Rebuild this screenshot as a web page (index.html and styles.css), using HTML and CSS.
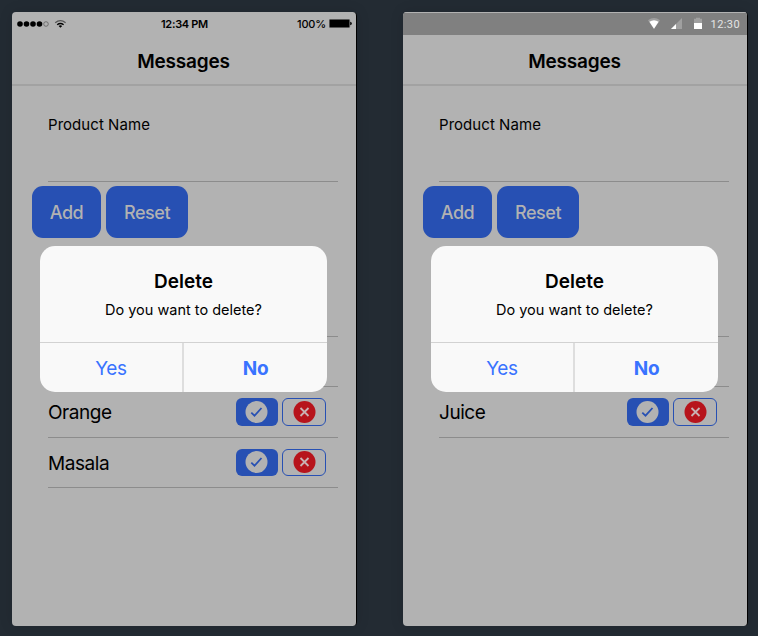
FILE: index.html
```html
<!DOCTYPE html>
<html lang="en">
<head>
<meta charset="utf-8">
<title>Messages</title>
<link rel="stylesheet" href="styles.css">
</head>
<body>
<svg class="defs" width="0" height="0" aria-hidden="true">
  <symbol id="check" viewBox="0 0 22 22"><circle cx="11" cy="11" r="11" fill="#b2b2b2"/><path d="M5.8 11.7 9 14.7 16 7" fill="none" stroke="#2750b3" stroke-width="1.8"/></symbol>
  <symbol id="close" viewBox="0 0 22 22"><circle cx="11" cy="11" r="11" fill="#b7141b"/><path d="m7 7 8 8m0-8-8 8" fill="none" stroke="#c9b2b3" stroke-width="1.8"/></symbol>
</svg>
<main class="stage">
  <section class="phone">
    <div class="status ios">
      <svg class="signal" width="52" height="12" viewBox="0 0 52 12"><g><circle cx="3" cy="6" r="2.8"/><circle cx="9.5" cy="6" r="2.8"/><circle cx="16" cy="6" r="2.8"/><circle cx="22.5" cy="6" r="2.8"/><circle cx="29" cy="6" r="2.3" fill="none" stroke="#555" stroke-width=".7"/></g><g fill="none"><path d="M38.2 4.8q5.2-4.4 10.4 0" stroke="#555" stroke-width="1.3"/><path d="M40.2 6.8q3.2-2.5 6.4 0" stroke="#000" stroke-width="1.4"/></g><path d="m41.6 7.9 1.8 1.8 1.8-1.8q-1.8-1.1-3.6 0"/></svg>
      <span class="time">12:34 PM</span>
      <span class="power">100%<svg width="23" height="9" viewBox="0 0 23 9"><rect x=".4" y=".4" width="20.2" height="8.2" rx="1" fill="#000" stroke="#555" stroke-width=".8"/><path d="M21.2 2.8q1.6.2 1.6 1.7t-1.6 1.7z"/></svg></span>
    </div>
    <header class="title">Messages</header>
    <div class="field"><label>Product Name</label></div>
    <div class="actions"><button class="btn add">Add</button><button class="btn reset">Reset</button></div>
    <div class="list">
      <div class="row spacer"></div>
      <div class="row"></div>
      <div class="row tall"><span>Orange</span><i class="chip ok"><svg width="23" height="22"><use href="#check"/></svg></i><i class="chip no"><svg width="23" height="22"><use href="#close"/></svg></i></div>
      <div class="row last"><span>Masala</span><i class="chip ok"><svg width="23" height="22"><use href="#check"/></svg></i><i class="chip no"><svg width="23" height="22"><use href="#close"/></svg></i></div>
    </div>
    <div class="alert">
      <div class="message"><h2>Delete</h2><p>Do you want to delete?</p></div>
      <div class="choices"><span class="yes">Yes</span><span class="nope">No</span></div>
    </div>
  </section>
  <section class="phone">
    <div class="status android">
      <svg width="56" height="14" viewBox="0 0 56 14"><path d="M0 3.2q6-4.6 12 0L6 12z" fill="#a0a0a0"/><path d="M1.4 4.7q4.6-3 9.2 0L6 11.7z" fill="#fff"/><path d="M23 12 34 1v11z" fill="#a0a0a0"/><path d="m23 12 5-5v5z" fill="#fff"/><path d="M46 1.8h2V.8h4v1h2V6h-8z" fill="#a0a0a0"/><path d="M46 6h8v6h-8z" fill="#fff"/></svg>
      <span class="clock">12:30</span>
    </div>
    <header class="title">Messages</header>
    <div class="field"><label>Product Name</label></div>
    <div class="actions"><button class="btn add">Add</button><button class="btn reset">Reset</button></div>
    <div class="list">
      <div class="row spacer"></div>
      <div class="row"></div>
      <div class="row tall"><span>Juice</span><i class="chip ok"><svg width="23" height="22"><use href="#check"/></svg></i><i class="chip no"><svg width="23" height="22"><use href="#close"/></svg></i></div>
    </div>
    <div class="alert">
      <div class="message"><h2>Delete</h2><p>Do you want to delete?</p></div>
      <div class="choices"><span class="yes">Yes</span><span class="nope">No</span></div>
    </div>
  </section>
</main>
</body>
</html>
```
FILE: styles.css
```css
* { box-sizing: border-box; }
body { margin: 0; background: #232b33; font-family: Inter, "Liberation Sans", sans-serif; color: #000; }
.defs { position: absolute; }
.stage { display: flex; gap: 46px; height: 636px; padding: 12px 0 0 12px; overflow: hidden; }
.phone { position: relative; flex: none; width: 345px; height: 614px; border-right: 1px solid #000; border-radius: 4px; background: #b2b2b2; box-shadow: 0 0 14px rgba(0, 0, 0, .12); overflow: hidden; }
.status { height: 23px; display: flex; align-items: center; font-size: 11px; }
.ios { display: grid; grid-template-columns: 1fr auto 1fr; padding: 0 4px 0 5px; }
.time { font-weight: 600; letter-spacing: -.3px; }
.power { display: flex; align-items: center; justify-content: flex-end; gap: 3px; font-weight: 500; letter-spacing: -.2px; }
.android { justify-content: flex-end; gap: 7px; padding-right: 7px; border-top: 1px solid #b2b2b2; background: #808080; color: #e4e4e4; font-family: Roboto, sans-serif; font-size: 11px; letter-spacing: .4px; }
.title { height: 51px; padding-right: 1px; border-bottom: 2px solid #a2a2a2; text-align: center; font-size: 19px; line-height: 53px; font-weight: 600; letter-spacing: -.2px; }
.field { height: 96px; margin: 0 18px 0 36px; padding-top: 29px; border-bottom: 1px solid #8c8c8c; font-size: 15px; line-height: 20px; letter-spacing: .05px; }
.actions { display: flex; gap: 5px; padding: 4px 0 0 20px; }
.btn { height: 52px; padding: 2px 0 0; border: 0; border-radius: 11px; background: #2750b3; color: #b2b2b2; font: 500 18px/50px Inter, sans-serif; letter-spacing: -.45px; }
.add { width: 69px; }
.reset { width: 82px; }
.list { margin: 0 18px 0 36px; }
.row { display: flex; align-items: center; gap: 4px; height: 50px; padding-right: 12px; border-bottom: 1px solid #8c8c8c; font-size: 19px; letter-spacing: -.45px; }
.row.spacer { height: 99px; }
.row.tall { height: 51px; }
.row span { flex: 1; }
.chip { display: flex; align-items: center; justify-content: center; height: 28px; border-radius: 6px; }
.last .chip { height: 27px; padding-bottom: 1px; }
.last span { padding-top: 1px; }
.ok { width: 42px; padding-right: 1px; background: #2750b3; }
.no { width: 44px; padding-left: 1px; border: 1px solid #2750b3; }
.alert { position: absolute; left: 28px; top: 234px; width: 287px; height: 146px; border-radius: 15px; background: #f9f9f9; overflow: hidden; text-align: center; }
.message { height: 97px; padding-top: 24px; border-bottom: 1px solid #d2d2d2; }
h2 { margin: 0; font-size: 19px; line-height: 24px; font-weight: 600; }
p { margin: 6px 0 0; font-size: 14.5px; line-height: 20px; }
.choices { display: grid; grid-template-columns: 144px 1fr; height: 49px; color: #3973ff; font-size: 19px; line-height: 52px; letter-spacing: -.4px; }
.yes { border-right: 2px solid #dedede; }
.nope { font-weight: 700; letter-spacing: -.2px; }
```
